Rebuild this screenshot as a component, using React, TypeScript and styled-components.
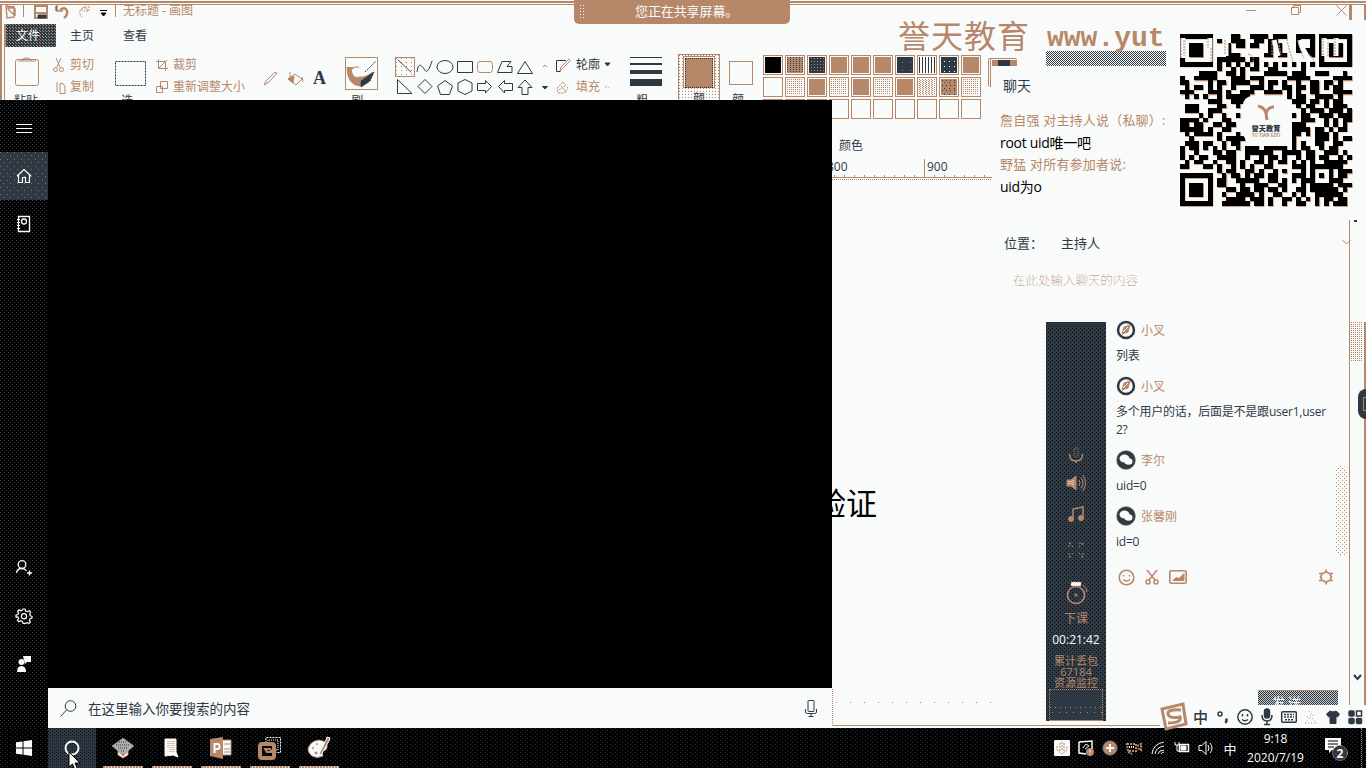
import React from "react";
import styled, { createGlobalStyle, css } from "styled-components";

const paper = "#f9fbfb";
const tan = "#b68869";
const navy = "#2f3944";
const ink = "#000000";

const dot = (c: string) => `conic-gradient(from 0deg at 1px 1px, transparent 75%, ${c} 0)`;
const grain = (c: string, bg: string, a = 4, b = 4) => css`
  background: ${dot(c)} 0 0 / ${a}px ${b}px, ${dot(c)} ${Math.floor(a / 2)}px ${Math.floor(b / 2)}px / ${a}px ${b}px, ${bg};
`;

const Global = createGlobalStyle`
  * { box-sizing: border-box; }
  body { margin: 0; background: ${paper}; overflow: hidden;
    font-family: "Open Sans", "Noto Sans CJK SC", sans-serif; font-size: 12px; color: ${navy}; }
  svg { display: block; flex: none; overflow: visible; }
`;

const Desktop = styled.div`
  position: relative; width: 1366px; height: 768px; overflow: hidden;
  display: flex; flex-direction: column; background: ${paper}; white-space: nowrap;
`;

/* ---------- paint window ---------- */
const PaintWindow = styled.main`
  flex: 1; min-height: 0; display: flex; flex-direction: column; border-top: 1px solid ${paper};
`;
const TopEdge = styled.div`
  height: 4px; border-top: 2px solid ${tan}; border-bottom: 1px solid ${tan}; flex: none;
`;
const TitleBar = styled.div`
  height: 18px; display: flex; align-items: flex-start; padding-left: 3px; color: ${tan}; flex: none;
  border-left: 2px solid ${tan};
`;
const TitleIcons = styled.div`display: flex; align-items: flex-start; width: 118px; gap: 7px;`;
const TitleText = styled.span`line-height: 14px; margin-top: -1px;`;
const WindowControls = styled.div`
  margin-left: auto; display: flex; align-items: flex-start; gap: 35px; height: 18px;
`;
const EdgeStub = styled.div`
  width: 17px; height: 15px; margin-left: -33px; border-left: 3px solid ${tan}; border-right: 2px solid ${tan};
`;
const Tabs = styled.div`
  height: 24px; display: flex; align-items: center; flex: none; border-left: 2px solid ${tan};
`;
const FileTab = styled.div`
  width: 52px; height: 23px; margin-left: 2px; margin-right: 14px; display: flex; align-items: center; justify-content: center;
  color: ${paper}; font-size: 12px; border-left: 2px solid ${tan}; padding-right: 6px;
  ${grain("#a89385", navy, 3, 3)}
`;
const Tab = styled.div`width: 53px; font-size: 12px; margin-top: -1px;`;

const Ribbon = styled.div`
  height: 112px; display: grid; flex: none; color: ${tan};
  grid-template-columns: 47px 60px 45px 107px 83px 51px 161px 69px 53px 45px 37px 1fr;
  border-left: 2px solid ${tan};
  padding-top: 8px;
  box-shadow: inset 2px 0 ${paper}, inset 3px 0 ${tan};
`;
const Group = styled.div<{ $gap?: number; $top?: number; $left?: number }>`
  display: flex; flex-direction: column; align-items: flex-start;
  gap: ${(p) => p.$gap ?? 0}px; padding-top: ${(p) => p.$top ?? 0}px; padding-left: ${(p) => p.$left ?? 0}px;
`;
const Command = styled.div<{ $dark?: boolean }>`
  display: flex; align-items: center; gap: 5px; height: 16px; font-size: 12px; line-height: 16px;
  color: ${(p) => (p.$dark ? navy : tan)};
`;
const Caption = styled.div`font-size: 12px; line-height: 14px; color: ${navy};`;
const ToolRow = styled.div`display: flex; align-items: center; gap: 9px;`;
const BrushBox = styled.div`width: 33px; height: 33px; border: 1px solid ${tan};`;
const ShapeGrid = styled.div`display: grid; grid-template-columns: repeat(8, 20px); grid-auto-rows: 20px; width: 160px;`;
const ShapeCell = styled.div<{ $on?: boolean }>`
  width: 20px; height: 20px; display: flex; align-items: center; justify-content: center;
  ${(p) => p.$on && css`border: 1px solid ${tan}; background: ${dot(tan)} 0 0 / 5px 4px;`}
`;
const Stroke = styled.div<{ $h: number }>`width: 32px; height: ${(p) => p.$h}px; background: ${navy};`;
const ColorOne = styled.div`
  width: 42px; height: 60px; border: 1px solid ${tan}; display: flex; flex-direction: column; align-items: center;
  gap: 4px; padding-top: 1px; background: ${dot(tan)} 0 0 / 3px 3px; margin-top: -1px;
`;
const ColorOneSwatch = styled.div`
  width: 32px; height: 32px; border: 1px solid ${tan}; padding: 1px; background: ${paper};
  &::after { content: ""; display: block; height: 28px; border: 1px dotted ${navy}; background: ${tan}; }
`;
const ColorTwoSwatch = styled.div`width: 24px; height: 24px; border: 1px solid ${tan}; margin-bottom: 8px;`;
const Palette = styled.div`display: grid; grid-template-columns: repeat(10, 20px); grid-auto-rows: 20px; gap: 2px;`;
type Fill = "ink" | "mix" | "navy" | "tan" | "lines" | "stars" | "light" | "cross" | "speck" | "deep" | "none";
const fills: Record<Fill, string> = {
  ink: ink,
  mix: `${dot(navy)} 0 0 / 3px 2px, ${tan}`,
  deep: `${dot(tan)} 2px 1px / 3px 3px, ${navy}`,
  navy: `${dot(tan)} 5px 5px / 8px 8px, ${navy}`,
  tan: tan,
  lines: `repeating-linear-gradient(90deg, ${navy} 0 1px, ${paper} 1px 3px)`,
  stars: `${dot(paper)} 3px 4px / 5px 5px, ${navy}`,
  light: `${dot(tan)} 0 0 / 2px 2px`,
  cross: `${dot(tan)} 0 0 / 3px 2px, ${dot(tan)} 1px 1px / 3px 2px`,
  speck: `${dot(navy)} 1px 1px / 4px 5px, ${dot(navy)} 3px 3px / 5px 6px, ${tan}`,
  none: "none",
};
const Swatch = styled.div<{ $fill: Fill }>`
  border: 1px solid ${tan}; padding: 1px;
  &::after { content: ""; display: block; height: 16px; background: ${(p) => fills[p.$fill]}; }
`;
const RulerArea = styled.div`
  height: 22px; margin-left: 832px; width: 160px; flex: none; display: flex; flex-direction: column; justify-content: flex-end;
  font-size: 12px; color: ${navy};
`;
const RulerLabels = styled.div`display: flex; height: 16px; line-height: 15px;`;
const RulerMark = styled.span<{ $w?: number; $line?: boolean }>`
  width: ${(p) => p.$w}px; ${(p) => p.$line ? css`border-left: 1px solid ${tan}; padding-left: 2px; height: 19px;` : css`margin-left: -5px;`}
`;
const Ticks = styled.div`
  height: 4px; border-bottom: 1px solid ${tan};
  background: repeating-linear-gradient(90deg, transparent 0 2px, ${tan} 2px 3px, transparent 3px 10px);
`;
const TickShade = styled.div`height: 4px; margin-top: 1px; background: ${dot(tan)} 0 0 / 2px 2px;`;
const Canvas = styled.div`flex: 1; margin-left: 832px; display: flex; flex-direction: column; overflow: hidden;`;
const CanvasText = styled.div`
  margin-top: 300px; margin-left: -17px; font-size: 31px; line-height: 44px; color: ${ink}; height: 44px;
`;
const StatusLine = styled.div`
  margin-top: auto; margin-bottom: 2px; height: 37px; width: 328px; border-bottom: 1px solid ${tan}; border-left: 1px dotted ${tan};
  background: ${dot(tan)} 3px 13px / 14px 60px;
`;

/* ---------- start panel ---------- */
const StartPanel = styled.section`
  position: absolute; left: 0; top: 100px; width: 832px; height: 628px; display: flex; background: ${ink};
`;
const Rail = styled.nav`
  width: 48px; display: flex; flex-direction: column; padding-top: 4px; ${grain("#25303b", ink, 4, 4)}
`;
const RailItem = styled.div<{ $on?: boolean; $push?: boolean }>`
  height: 48px; display: flex; align-items: center; justify-content: center; color: ${paper};
  margin-top: ${(p) => (p.$push ? "auto" : "0")};
  ${(p) => p.$on && grain("#8b6f5c", navy, 7, 7)}
  &:last-child { margin-bottom: 40px; }
`;
const StartBody = styled.div`flex: 1; display: flex; flex-direction: column; justify-content: flex-end;`;
const SearchBar = styled.div`
  height: 40px; background: ${paper}; display: flex; align-items: center; padding: 0 15px 0 12px; font-size: 13.5px; color: ${navy};
  & > span { margin-left: 11px; flex: 1; }
`;

/* ---------- overlays ---------- */
const ShareBanner = styled.div`
  position: absolute; left: 574px; top: 0; width: 216px; height: 24px; border-radius: 0 0 5px 5px; background: ${tan};
  color: ${paper}; font-size: 13px; display: flex; align-items: center; padding-left: 6px; line-height: 22px;
  & > span { margin-left: 49px; margin-top: -3px; letter-spacing: -0.1px; }
`;
const Grip = styled.i`width: 6px; height: 15px; background: ${dot(paper)} 0 0 / 3px 3px;`;
const Brand = styled.div`
  position: absolute; left: 898px; top: 14px; height: 44px; display: flex; align-items: center; color: ${tan};
  font-size: 32px; letter-spacing: 1px; line-height: 44px;
`;
const Site = styled.span`
  font-family: "Liberation Mono", monospace; font-weight: 700; font-size: 28px; letter-spacing: 0; margin-left: 17px;
  padding-top: 6px;
`;
const ChatWindow = styled.section`
  position: absolute; left: 992px; top: 66px; width: 358px; height: 639px; background: ${paper};
  display: flex; flex-direction: column;
`;
const ChatTop = styled.div`height: 154px; padding: 10px 0 0 8px; display: flex; flex-direction: column;`;
const ChatTitle = styled.div`font-size: 14px; line-height: 20px; padding-left: 3px; margin-bottom: 13px;`;
const ChatLine = styled.div<{ $from?: boolean }>`
  height: 22px; line-height: ${(p) => (p.$from ? 22 : 24)}px;
  color: ${(p) => (p.$from ? tan : ink)}; font-size: ${(p) => (p.$from ? 13 : 14)}px;
  letter-spacing: ${(p) => (p.$from ? 0.2 : -0.3)}px;
`;
const ChatBottom = styled.div`flex: 1; border-right: 1px solid ${tan}; display: flex; flex-direction: column;`;
const SendTo = styled.div`
  height: 44px; display: flex; align-items: center; padding: 0 0 0 12px; font-size: 13px; color: ${navy};
  & > span { width: 57px; } & > svg { margin-left: auto; margin-right: -2px; }
`;
const Placeholder = styled.div`
  padding-left: 21px; height: 34px; line-height: 34px; color: ${tan}; font-weight: 100; font-size: 12.5px;
`;

const CornerClip = styled.div`
  position: absolute; left: 988px; top: 58px; width: 29px; height: 29px; border-top: 1px solid ${tan};
  border-left: 3px double ${tan}; border-radius: 2px;
  &::before { content: ""; display: block; height: 6px; margin-left: 1px; margin-top: 1px; background: linear-gradient(90deg, ${tan} 6px, ${navy} 6px 18px, ${tan} 18px); }
`;
const CheckStrip = styled.div`
  position: absolute; left: 1046px; top: 51px; width: 120px; height: 15px;
  ${grain(paper, navy, 2, 2)}
`;
const QrCard = styled.div`position: absolute; left: 1180px; top: 34px; width: 174px; height: 174px;`;

const ClassPanel = styled.section`
  position: absolute; left: 1046px; top: 322px; width: 303px; height: 399px; display: flex;
`;
const ClassRail = styled.div`
  width: 60px; display: flex; flex-direction: column; align-items: center; color: ${tan}; ${grain("#0b0f13", navy, 4, 4)}
  padding-top: 124px; font-size: 12px;
`;
const RailIcon = styled.div<{ $h: number }>`height: ${(p) => p.$h}px; display: flex; align-items: center;`;
const RailText = styled.div<{ $h: number; $white?: boolean; $small?: boolean }>`
  height: ${(p) => p.$h}px; line-height: ${(p) => p.$h}px; color: ${(p) => (p.$white ? paper : tan)};
  font-size: ${(p) => (p.$small ? 11 : 12)}px;
`;
const Monitor = styled.div`
  width: 54px; height: 32px; margin-top: 1px; border: 1px dotted ${tan}; border-bottom: 1px solid ${tan};
  background: ${dot(tan)} 0 17px / 5px 4px repeat-x, ${dot(tan)} 2px 22px / 7px 4px repeat-x, ${navy};
`;
const Messages = styled.div`flex: 1; padding-left: 10px; display: flex; flex-direction: column; position: relative;`;
const Author = styled.div`
  height: 18px; display: flex; align-items: center; gap: 5px; color: ${tan}; margin-top: -1px; margin-bottom: 1px;
`;
const Message = styled.div<{ $h: number }>`
  height: ${(p) => p.$h}px; padding-top: 7px; line-height: 18px; color: ${navy}; letter-spacing: -0.24px;
`;
const ChatTools = styled.div`
  display: flex; align-items: center; gap: 8px; padding: 0 15px 0 2px; height: 20px; margin-top: -1px; color: ${tan};
  & > :last-child { margin-left: auto; }
`;
const MessageScroll = styled.i`
  position: absolute; right: 2px; top: 144px; width: 11px; height: 90px; border-radius: 5px;
  background: ${dot(tan)} 0 0 / 4px 4px, ${dot(tan)} 2px 2px / 4px 4px;
`;
const SendButton = styled.div`
  position: absolute; left: 1258px; top: 690px; width: 80px; height: 16px; overflow: hidden; text-align: center; color: ${paper};
  font-size: 13px; line-height: 22px; letter-spacing: 3px; border-top: 1px solid ${tan}; padding-right: 20px;
  ${grain("#c5c8ca", navy, 2, 2)}
`;
const OuterScroll = styled.div`
  position: absolute; left: 1351px; top: 218px; width: 15px; height: 488px; background: ${paper};
  display: flex; flex-direction: column;
`;
const TopArrow = styled.i`width: 3px; height: 2px; background: ${navy}; margin: 2px 0 0 3px;`;
const ScrollThumb = styled.div`margin-top: 100px; width: 12px; height: 40px; background: ${dot(tan)} 0 0 / 2px 2px;`;
const ScrollDown = styled.div`margin: auto 0 25px 2px;`;
const EdgeLine = styled.i`position: absolute; left: 13px; top: 104px; width: 2px; height: 384px; background: ${tan};`;
const EdgeKnob = styled.i`
  position: absolute; left: 7px; top: 171px; width: 16px; height: 30px; border-radius: 8px; background: ${navy};
  &::after { content: ""; display: block; margin: 8px 0 0 5px; width: 6px; height: 12px; border: 1px solid ${tan}; }
`;
const ImeBar = styled.div`
  position: absolute; left: 1160px; top: 705px; width: 206px; height: 23px; background: ${paper}; color: ${navy};
  display: grid; grid-template-columns: 30px repeat(8, 22px); align-items: center; justify-items: center; font-size: 15px; font-weight: 500;
  & > * { margin-top: -2px; margin-left: -1px; line-height: 20px; }
  & > :first-child { margin-left: -5px; }
`;

/* ---------- taskbar ---------- */
const Taskbar = styled.footer`
  height: 40px; flex: none; display: flex; ${grain("#25303b", ink, 5, 4)} color: ${paper};
`;
const TaskButton = styled.div<{ $active?: boolean; $open?: boolean; $w?: number }>`
  width: ${(p) => p.$w ?? 49}px; display: flex; align-items: center; justify-content: center; position: relative;
  ${(p) => p.$active && grain("#0d1114", navy, 4, 3)}
  ${(p) => p.$open && css`padding-right: 2px; &::after { content: ""; position: absolute; left: 4px; bottom: 0; width: 40px; height: 2px;
    background: repeating-linear-gradient(90deg, ${tan} 0 2px, #e5d3c8 2px 3px); }`}
`;
const TaskGap = styled.div`width: 3px;`;
const Tray = styled.div`margin-left: auto; display: grid; grid-template-columns: repeat(8, 24px); align-items: center; justify-items: center; font-size: 13px;`;
const Clock = styled.div`
  width: 68px; display: flex; flex-direction: column; align-items: center; justify-content: center; font-size: 12px; line-height: 19px;
  padding-bottom: 1px; padding-right: 1px;
`;
const Notices = styled.div`width: 52px; display: flex; align-items: center; justify-content: center; border-right: 1px dotted ${tan}; margin-right: 4px;`;
const Cursor = styled.div`position: absolute; left: 68px; top: 752px;`;

const Ico: React.FC<{ s?: number; w?: number; h?: number; c?: string; sw?: number; vb?: string; children: React.ReactNode }> = ({
  s = 16, w, h, c = "currentColor", sw = 1, vb, children,
}) => (
  <svg width={w ?? s} height={h ?? s} viewBox={vb ?? `0 0 ${w ?? s} ${h ?? s}`} fill="none" stroke={c} strokeWidth={sw}>
    {children}
  </svg>
);

const shapePaths = [
  "M2 2L17 16", "M2 15C3 6 6 7 9 12C12 17 14 13 17 4", "M2 10a8 6.5 0 1 0 16 0a8 6.5 0 1 0 -16 0", "M2.5 4.5h15v11h-15z",
  "M5 4.5h10q2.500 0 2.500 3v5q0 3 -2.500 3h-10q-2.500 0-2.500-3v-5q0-3 2.500-3z", "M2.500 15.500L7 4.500H16L12 9.500H17V15.500Z", "M10 4.500L17.500 16.500H2.500Z", "M8 10L10 8L12 10",
  "M2.500 2.500V16.500H17Z", "M10 2.500L17 9.500L10 16.500L3 9.500Z", "M10 3.500L17.500 9L14.500 17.500H5.500L2.500 9Z", "M10 2.500L17 6V14L10 17.500L3 14V6Z",
  "M2.500 6.500H10.500V3.500L16.500 9.500L10.500 16V13.500H2.500Z", "M17.500 6.500H9.500V3.500L3.500 9.500L9.500 16V13.500H17.500Z", "M7 17.500V10.500H3L10 3L17 10.500H13V17.500Z", "M7.500 9.500H12.500L10 12Z",
];
const paletteRows: Fill[][] = [
  ["ink", "mix", "deep", "tan", "tan", "tan", "navy", "lines", "stars", "tan"],
  ["none", "light", "tan", "light", "tan", "light", "tan", "cross", "speck", "light"],
  Array(10).fill("none") as Fill[],
];

const qrRows = [
  "1111111....11..1111.111..1111.1111111",
  "1.....1.1..111..11.11....1..1.1.....1",
  "1.111.1...1.11.11..111...1..1.1.111.1",
  "1.111.1...1........1.1...1111.1.111.1",
  "1.111.1...111.....11.11....11.1.111.1",
  "1.....1.111111.11.............1.....1",
  "1111111.1.1.1.1.1.1.1.1.1.1.1.1111111",
  "........1..1.1.11..11.....1..........",
  "....1111..11.1....11111.111..111...1.",
  "1..11111...111.111.....11111.....1111",
  "11....1.11.1111..1.11.1..1..11.11.1..",
  ".1.11.1.1..1...111.1..11.11.11.1.11..",
  "111...111.1..111..1111.1.1..11...1111",
  ".1.1.1..1.11111........1.11..1111.1..",
  "......111..111..........111.11.1.11..",
  ".111....11..1............1.11..1.111.",
  ".111..111.................1.111.111.1",
  "....1.1..1..1...........1.11..111.111",
  "1111.1...11...............111..1.1.11",
  "11.11..11.11............111....1.1.1.",
  "11111.1..11.............1111.11.1.11.",
  ".1.1111.1...1...........11.1.111.1...",
  "..1.....1.1111..........1....111.1.11",
  ".111.11..1.11...........1.1..11..11..",
  "1.11.1.1.1..1.111.11111.1.11..1.11...",
  "1..1...11.11..111111..1111.11..111.1.",
  "1.1.11..1111..1..1.11.1..1.11.11..1.1",
  ".1.11..1..11.1..11.1.11.1.1.1..11111.",
  "11...11.1..1.1.1..11....111.1111111..",
  "........1.11..11.1..1.1...1.1...1.111",
  "1111111..1.11.1.11.11...111.1.1.1.11.",
  "1.....1.11..11111..11.1.1.111...111..",
  "1.111.1.11...1..111..11...1.11111.111",
  "1.111.1...11.11.11.11.1..11.111111.1.",
  "1.111.1..1..1111.1..11..1.1..111111..",
  "1.....1...1111.111.1..11.1.1.1.11.11.",
  "1111111..111111.11.1..1..11..1.1.111.",
];

const Qr = () => {
  const m = 172 / 37;
  let d = "";
  qrRows.forEach((row, y) => {
    for (let x = 0; x < 37; x++) if (row[x] === "1") d += `M${(x * m).toFixed(2)} ${(y * m).toFixed(2)}h${m.toFixed(2)}v${m.toFixed(2)}h-${m.toFixed(2)}z`;
  });
  return (
    <svg width="174" height="174" viewBox="0 0 174 174">
      <path d={d} fill={tan} transform="translate(.7 .7)" />
      <path d={d} fill={ink} shapeRendering="crispEdges" />
      <path d="M3 4v20M30 4v24M46 5v17M94 6l4 16M108 5q4 12 7 22M120 6q2 10 10 20M144 4v18M156 4v18" stroke={paper} strokeWidth="5" fill="none" />
      <path d="M1 4v20M4 6v16M28 4v10M31 14v14M45 6v15M92 7v14M98 5l3 16M107 5q2 12 6 22M118 6q2 12 6 18M128 20q5 2 6 8M68 20q8 2 4 10M143 4v18M148 8v14M155 4v18" stroke={tan} fill="none" strokeDasharray="2 1" />
      <rect x="63" y="62" width="46" height="46" rx="9" fill={paper} />
      <path d="M78 72q6 1 8 7l1 7M86 79q2-6 8-6" stroke={tan} strokeWidth="3" fill="none" />
      <text x="86" y="97" fontSize="7.200" fontWeight="900" textAnchor="middle" fill={navy} fontFamily="Noto Sans CJK SC">誉天教育</text>
      <text x="86" y="103" fontSize="4.500" fontWeight="700" textAnchor="middle" fill={tan} fontFamily="Liberation Sans">YU TIAN EDU</text>
    </svg>
  );
};

const CompassAvatar = () => (
  <Ico s={20}>
    <circle cx="10" cy="10" r="8" stroke={navy} strokeWidth="2.500" />
    <path d="M6 14L8 7L14 5L12 12Z" stroke={tan} fill={tan} /><path d="M7 12L12 7" stroke={paper} />
  </Ico>
);
const WechatAvatar = () => (
  <Ico s={20}>
    <circle cx="10" cy="10" r="9.500" fill={navy} stroke={tan} strokeWidth=".5" />
    <ellipse cx="8.500" cy="8.500" rx="5" ry="4" fill={paper} stroke="none" />
    <ellipse cx="12.500" cy="11.500" rx="4" ry="3.200" fill={paper} stroke="none" />
  </Ico>
);
const gear = "M7 1h2l.6 2 1.700.7L13.200 2.800l1.400 1.400-1 1.800.7 1.700 1.700.6v1.800l-1.900.6-.7 1.700 1 1.800-1.400 1.400-1.800-1-1.700.7L9 15.300H7l-.6-1.900-1.700-.7-1.800 1-1.400-1.400 1-1.800-.7-1.700L0 9V7.200l1.900-.6.7-1.700-1-1.800L3 1.800l1.700 1 1.700-.7z";

const App: React.FC = () => (
  <>
    <Global />
    <Desktop>
      <PaintWindow>
        <TopEdge />
        <TitleBar>
          <TitleIcons>
            <Ico w={11} h={14}><path d="M1 1l8 1v10l-7 1zM3 4l5 5M8 1l2 3v7M2 3h6" strokeWidth="1.400" /></Ico>
            <Ico w={4} h={14}><path d="M.5 0v12" /></Ico>
            <Ico s={14}><path d="M1 1h12v12H1z" strokeWidth="2" /><path d="M1 8h12" strokeWidth="2" /><path d="M4 10h8v3H4z" fill={navy} stroke={navy} /></Ico>
            <Ico w={15} h={14}><path d="M2 0v6h6" strokeWidth="1.500" /><path d="M5 5q5-4 7 1q1 4-3 7" strokeWidth="2.500" /><path d="M1 1v5" stroke={navy} /></Ico>
            <Ico s={14}><path d="M12 1v5H7M11 5Q5 0 3 6q-1 4 3 7M10 2Q5 1 5 6" strokeDasharray="2 1" /></Ico>
            <Ico w={8} h={12} c={ink}><path d="M2 5.500h7" /><path d="M3 8h5L5.500 11z" fill={ink} /></Ico>
            <Ico w={2} h={14}><path d="M2.500 0v12" /></Ico>
          </TitleIcons>
          <TitleText>无标题 - 画图</TitleText>
          <WindowControls>
            <Ico w={10} h={12}><path d="M0 5.500h10" /></Ico>
            <Ico w={10} h={10}><path d="M.5 2.500h7v7h-7zM2.500 2V.5h7v7H8" /></Ico>
            <Ico w={11} h={11}><path d="M.5.5l10 10M10.500.5l-10 10" /></Ico>
            <EdgeStub />
          </WindowControls>
        </TitleBar>
        <Tabs>
          <FileTab>文件</FileTab>
          <Tab>主页</Tab>
          <Tab>查看</Tab>
        </Tabs>
        <Ribbon>
          <Group $left={12} $top={2} $gap={7}>
            <Ico w={26} h={30}><rect x="1.500" y="2.500" width="23" height="26" rx="2" /><path d="M8 4q0-3 4-3q5 0 5 3M4 4h18" /></Ico>
            <Caption>粘贴</Caption>
          </Group>
          <Group $left={4} $top={2} $gap={6}>
            <Command><Ico w={12} h={14}><path d="M3 0l4 9M8 0L4 9" /><circle cx="2.500" cy="11.500" r="2" /><circle cx="8.500" cy="11.500" r="2" /></Ico>剪切</Command>
            <Command><Ico w={12} h={14}><path d="M4 2v10M7 3.500h3l2 3v7H7z" /></Ico>复制</Command>
          </Group>
          <Group $left={6} $top={6} $gap={8}>
            <Ico w={31} h={25} c={navy}><path d="M.5.5h30v24H.5z" strokeDasharray="2 1" /></Ico>
            <Caption>&nbsp;&nbsp;选</Caption>
          </Group>
          <Group $left={2} $top={2} $gap={6}>
            <Command><Ico w={12} h={12}><path d="M2.500 0v9.500H12M0 2.500h9.500V12M11 1L3 9" /></Ico>裁剪</Command>
            <Command><Ico w={12} h={12}><path d="M4.500.5h7v7h-7zM.5 5.500h6v6h-6z" /></Ico>重新调整大小</Command>
          </Group>
          <Group $left={2} $top={15}>
            <ToolRow>
              <Ico w={15} h={15}><path d="M1 14l2-4L12 1l2 1-8 9z" /></Ico>
              <Ico w={17} h={15}><path d="M1 8l7-5 7 5-6 6zM3 1v6M15 6l1 5" /><path d="M1 8l6-3-1 7z" fill={tan} /></Ico>
              <svg width="14" height="16"><text x="0" y="14" fontSize="18" fontWeight="700" fontFamily="Liberation Serif" fill={navy}>A</text></svg>
            </ToolRow>
          </Group>
          <Group $left={1} $top={2} $gap={4}>
            <BrushBox><Ico s={31}><path d="M1 9q0 17 12 19l8-3 6-11q-8 6-13 5Q7 22 5 12q3-4 8-3" fill={tan} /><path d="M19 14l11-11M15 23l13-9-4 9-9 6z" fill={navy} stroke={navy} strokeDasharray="2 1" /></Ico></BrushBox>
            <Caption>&nbsp;&nbsp;刷</Caption>
          </Group>
          <Group $top={2}>
            <ShapeGrid>
              {shapePaths.map((d, i) => (
                <ShapeCell key={i} $on={i === 0}>
                  <Ico s={i === 0 ? 18 : 20} vb="0 0 20 20" c={i === 7 || i === 4 ? tan : navy}><path d={d} fill={i === 15 ? navy : "none"} /></Ico>
                </ShapeCell>
              ))}
            </ShapeGrid>
          </Group>
          <Group $left={0} $top={2} $gap={6}>
            <Command $dark><Ico s={15}><path d="M10 2.500H.5v11h4" stroke={navy} /><path d="M4 13l1-4 8-8 1.500 1.500-8 8z" stroke={tan} fill="none" /></Ico>轮廓<Ico w={5} h={4}><path d="M0 0h5L2.500 3z" fill={navy} /></Ico></Command>
            <Command><Ico s={15}><path d="M1 8l6-6 5 6-4 5H2zM5 6l6 7M3 10l6-4" strokeDasharray="2 1" /></Ico>填充<Ico w={5} h={4}><path d="M0 3l2-2 2 2" strokeDasharray="1 1" /></Ico></Command>
          </Group>
          <Group $left={5} $top={2} $gap={5}>
            <Stroke $h={1} /><Stroke $h={2} /><Stroke $h={4} /><Stroke $h={7} />
            <Group $top={3}><Caption>&nbsp;&nbsp;粗</Caption></Group>
          </Group>
          <Group>
            <ColorOne><ColorOneSwatch /><Caption>颜</Caption></ColorOne>
          </Group>
          <Group $left={6} $top={6}>
            <ColorTwoSwatch /><Caption>&nbsp;颜</Caption>
          </Group>
          <Group $left={3} $top={0} $gap={20}>
            <Palette>{paletteRows.flat().map((f, i) => <Swatch key={i} $fill={f} />)}</Palette>
            <Group $left={76}><Caption>颜色</Caption></Group>
          </Group>
        </Ribbon>
        <RulerArea>
          <RulerLabels><RulerMark $w={97}>800</RulerMark><RulerMark $line>900</RulerMark></RulerLabels>
          <Ticks />
          <TickShade />
        </RulerArea>
        <Canvas>
          <CanvasText>验证</CanvasText>
          <StatusLine />
        </Canvas>
      </PaintWindow>

      <Taskbar>
        <TaskButton $w={48}>
          <Ico s={16}><path d="M0 2.300L6.500 1.400V7.500H0zM7.500 1.200L16 0V7.500H7.500zM0 8.500h6.500v6.100L0 13.700zM7.500 8.500H16V16L7.500 14.800z" fill={paper} stroke="none" /></Ico>
        </TaskButton>
        <TaskButton $w={48} $active><Ico s={16}><circle cx="8" cy="8" r="6.500" strokeWidth="2" /></Ico></TaskButton>
        <TaskGap />
        <TaskButton $open><Ico s={22}><path d="M6 13l5 6 5-6v5l-5 3-5-3z" fill={paper} stroke={tan} /><path d="M0 9L11 1l11 8-11 9z" fill="#aab0b4" stroke={tan} strokeDasharray="2 1" /><path d="M4 8h14M7 5h8M6 11h10M9 14h4" stroke={navy} strokeDasharray="1 1" /></Ico></TaskButton>
        <TaskButton $open><Ico w={14} h={20}><path d="M0 1h11v13l2 5-5-2-8 1z" fill={paper} stroke={paper} /><path d="M3 3v8M5 3v12M7 3v12M9 3v12" stroke={tan} strokeDasharray="1 1" /></Ico></TaskButton>
        <TaskButton $open>
          <Ico s={22}><path d="M12 3h9v15h-9z" fill={paper} stroke={tan} /><path d="M14 7h6M14 12h6M14 15h6" stroke={tan} /><path d="M0 2l13-2v22L0 19z" fill={tan} stroke="none" /><path d="M4.500 16V7h3q2 0 2 2.500T7.500 12h-3" stroke={paper} strokeWidth="2" /></Ico>
        </TaskButton>
        <TaskButton $open><Ico s={24}><path d="M8 7V1.500h14.500v15H17" stroke={paper} strokeDasharray="2 1" /><path d="M10 7V4h10v10h-3" stroke={paper} strokeDasharray="1 1" /><rect x="2" y="8" width="14" height="14" rx="2" stroke={tan} strokeWidth="4" /><path d="M7 13h5l2 3h-5z" stroke={tan} strokeWidth="2" /></Ico></TaskButton>
        <TaskButton $open><Ico s={24}><path d="M1 13Q3 5 12 4q9 1 8 8-1 3-5 3l1 5q-6 3-11 0Q1 17 1 13z" fill={paper} stroke={tan} /><circle cx="6" cy="12" r="1.500" fill={tan} /><circle cx="10" cy="8" r="1.500" fill={tan} /><circle cx="9" cy="17" r="2" fill={tan} /><path d="M12 18l7-14 1-3 3 1-1 3-8 14z" fill={tan} /></Ico></TaskButton>
        <Tray>
          <Ico s={16}><rect width="16" height="16" rx="1" fill={paper} stroke="none" /><path d="M3 6v4l5 4 5-4V6M6 3v8M8 2v9M10 3v8" stroke={tan} strokeDasharray="2 1" /></Ico>
          <Ico s={16}><path d="M1 2l13-1v8M1 2v11l7 1" strokeWidth="1.500" /><path d="M5 8l3-4 3 2-4 3" /><circle cx="12" cy="12" r="4" fill={tan} stroke="none" /><path d="M12 9.500v3M12 13.500v1" /></Ico>
          <Ico s={16}><circle cx="8" cy="8" r="7.500" fill={tan} stroke={navy} /><path d="M8 4v8M4 8h8" strokeWidth="2" /></Ico>
          <Ico s={16} c={tan}><path d="M1 4h9v7H2zM11 6l4-2v6l-4-2M2 12l4 2" strokeDasharray="2 1" strokeWidth="2" /><path d="M3 7h6" stroke={paper} strokeDasharray="1 1" strokeWidth="2" /></Ico>
          <Ico s={14}><path d="M1 13Q2 3 13 1M4 13Q5 6 13 5M7 13q1-4 6-4M10 13q1-2 3-2" /></Ico>
          <Ico s={16}><path d="M5.500 4.500h9v7h-9z" strokeWidth="1.500" /><path d="M7 6h5v4H7z" fill={paper} /><path d="M1 2v3h4V2M3 5v6h2" /></Ico>
          <Ico s={16}><path d="M1 5.500h3l4-4v13l-4-4H1zM10 5q2 3 0 6M12 3q4 5 0 10" /></Ico>
          <span>中</span>
        </Tray>
        <Clock><span>9:18</span><span>2020/7/19</span></Clock>
        <Notices>
          <Ico s={24}><path d="M1 2h16v12H8l-3 3v-3H1z" fill={paper} stroke="none" /><path d="M4 5h10M4 8h10M4 11h6" stroke={ink} /><circle cx="16" cy="17" r="7.500" fill={navy} stroke={tan} strokeDasharray="2 1" /><text x="16" y="21.500" fontSize="12" fontWeight="700" textAnchor="middle" fill={paper} stroke="none">2</text></Ico>
        </Notices>
      </Taskbar>

      <StartPanel>
        <Rail>
          <RailItem><Ico s={16}><path d="M0 4.500h16M0 8.500h16M0 12.500h16" /></Ico></RailItem>
          <RailItem $on><Ico s={16}><path d="M1 8L8 1.500 15 8M2.500 7v7.500h4v-5h3v5h4V7" strokeWidth="1.200" /></Ico></RailItem>
          <RailItem><Ico s={16}><path d="M2.500.5h11v15h-11z" strokeWidth="1.300" /><path d="M1 3.500h3M1 6.500h3M1 9.500h3M1 12.500h3" /><circle cx="8" cy="5.500" r="2.500" strokeWidth="1.300" /></Ico></RailItem>
          <RailItem $push><Ico s={16}><circle cx="6" cy="4.500" r="3.800" strokeWidth="1.300" /><path d="M.5 13Q1 8.500 6 8.500q3 0 4.500 2.500M13.500 10.500v5M11 13h5" strokeWidth="1.300" /></Ico></RailItem>
          <RailItem><Ico s={16}><path d={gear} strokeWidth="1.200" /><circle cx="8" cy="8.200" r="2.600" strokeWidth="1.200" /></Ico></RailItem>
          <RailItem><Ico s={16}><circle cx="5.500" cy="6" r="3" fill={paper} stroke="none" /><path d="M1 16q0-6 4.500-6t4.500 6zM7 0h8v6h-4l-2 2z" fill={paper} stroke="none" /></Ico></RailItem>
        </Rail>
        <StartBody>
          <SearchBar>
            <Ico s={17} c={navy}><circle cx="10.500" cy="6" r="5.300" /><path d="M6.500 10L.5 16.500" /></Ico>
            <span>在这里输入你要搜索的内容</span>
            <Ico w={12} h={17} c={navy}><rect x="3" y=".5" width="6" height="11" rx=".5" /><path d="M.5 9v3q0 1.500 2 1.500h7q2 0 2-1.500V9M6 13.500v3M3.500 16.500h5" /></Ico>
          </SearchBar>
        </StartBody>
      </StartPanel>

      <ShareBanner><Grip /><span>您正在共享屏幕。</span></ShareBanner>
      <ChatWindow>
        <ChatTop>
          <ChatTitle>聊天</ChatTitle>
          <ChatLine $from>詹自强 对主持人说（私聊）:</ChatLine>
          <ChatLine>root uid唯一吧</ChatLine>
          <ChatLine $from>野猛 对所有参加者说:</ChatLine>
          <ChatLine>uid为o</ChatLine>
        </ChatTop>
        <ChatBottom>
          <SendTo><span>位置：</span>主持人<Ico w={9} h={6} c={tan}><path d="M.5 1l4 4 4-4" /></Ico></SendTo>
          <Placeholder>在此处输入聊天的内容</Placeholder>
        </ChatBottom>
      </ChatWindow>
      <CornerClip />
      <CheckStrip />
      <Brand>誉天教育<Site>www.yut</Site></Brand>
      <QrCard><Qr /></QrCard>

      <ClassPanel>
        <ClassRail>
          <RailIcon $h={20}><Ico s={16}><path d="M1.500 6q0 7 6.500 7t6.500-7M8 13v2" strokeWidth="1.500" /><rect x="6" y="0" width="4" height="9" rx="2" strokeDasharray="1 1" /></Ico></RailIcon>
          <RailIcon $h={34}><Ico w={20} h={18}><path d="M1 6h4l5-4v14l-5-4H1z" fill={tan} /><path d="M3 7v4M5 7v4M7 6v6" stroke={paper} strokeDasharray="1 1" /><path d="M13 6q2 3 0 6M15 3.500q4 5.500 0 11M17 1q5 8 0 16" /></Ico></RailIcon>
          <RailIcon $h={28}><Ico s={16}><path d="M5 13V3l10-2v11" strokeWidth="1.500" /><circle cx="3" cy="13" r="2.500" fill={tan} /><circle cx="13" cy="12" r="2.500" fill={tan} /></Ico></RailIcon>
          <RailIcon $h={45}><Ico s={16}><path d="M1 5V1h4M11 1h4v4M1 11v4h4M15 11v4h-4M1 1l5 5M15 1l-5 5M1 15l5-5M15 15l-5-5" strokeDasharray="2 2" /></Ico></RailIcon>
          <RailIcon $h={41}><Ico w={20} h={24}><circle cx="10" cy="14" r="8.500" strokeWidth="1.600" /><path d="M5 1h10v4H5z" fill={paper} stroke={tan} strokeDasharray="1 1" /><path d="M10 12v4M8 14h4M17 4q4 3 4 7" /></Ico></RailIcon>
          <RailText $h={12}>下课</RailText>
          <RailText $h={30} $white>00:21:42</RailText>
          <RailText $h={11} $small>累计丢包</RailText>
          <RailText $h={11} $small>67184</RailText>
          <RailText $h={11} $small>资源监控</RailText>
          <Monitor />
        </ClassRail>
        <Messages>
          <Author><CompassAvatar />小叉</Author>
          <Message $h={38}>列表</Message>
          <Author><CompassAvatar />小叉</Author>
          <Message $h={56}>多个用户的话，后面是不是跟user1,user<br />2?</Message>
          <Author><WechatAvatar />李尔</Author>
          <Message $h={38}>uid=0</Message>
          <Author><WechatAvatar />张馨刚</Author>
          <Message $h={42}>id=0</Message>
          <ChatTools>
            <Ico s={17} sw={1.600}><circle cx="8.500" cy="8.500" r="7.300" /><path d="M5.500 6v1.500M11.500 6v1.500M5 10.500q3.500 3 7 0" /></Ico>
            <Ico w={18} h={16} sw={1.500}><path d="M4 1l8 10M14 1L6 11" /><circle cx="5" cy="13" r="2" /><circle cx="13" cy="13" r="2" /></Ico>
            <Ico w={18} h={14} sw={1.600}><rect x=".8" y=".8" width="16.400" height="12.400" rx="1.500" /><path d="M4 10.500l3-3 3 1 5-5v7z" fill={tan} strokeWidth="1" /></Ico>
            <Ico s={16} sw={1.600}><path d="M8 .5v3M8 12.500v3M1 4.500h4l2.500-1.500h1l2.500 1.500h4M1 11.500h4L7.500 13h1l2.500-1.500h4M3.500 4.500v2L2.500 8l1 1.500v2M12.500 4.500v2l1 1.500-1 1.500v2" /></Ico>
          </ChatTools>
          <MessageScroll />
        </Messages>
      </ClassPanel>
      <SendButton>发送</SendButton>
      <OuterScroll>
        <TopArrow />
        <ScrollThumb />
        <EdgeLine />
        <EdgeKnob />
        <ScrollDown><Ico w={9} h={7} c={navy} sw={2}><path d="M1 1l3.500 4L8 1" /></Ico></ScrollDown>
      </OuterScroll>
      <ImeBar>
        <Ico s={28}><path d="M3 6L24 1l3 20-20 5z" stroke={tan} strokeWidth="3" fill={paper} /><path d="M22 7Q8 6 9 11t12 3q2 6-12 6" stroke={tan} strokeWidth="3" /></Ico>
        <span>中</span>
        <Ico w={14} h={14} sw={1.500}><circle cx="4" cy="4" r="2" /><path d="M10.500 8.500v2q0 1.500-1.500 2" strokeWidth="2.500" /></Ico>
        <Ico s={16} sw={1.500}><circle cx="8" cy="8" r="7.200" /><path d="M5.500 5v2.500M10.500 5v2.500M5 10.500q3 2.500 6 0" /></Ico>
        <Ico w={12} h={16} sw={1.500}><rect x="3.500" y="0" width="5" height="9" rx="2.500" fill={navy} /><path d="M1 6q0 6 5 6t5-6M6 12v3.500M3 15.500h6" /></Ico>
        <Ico w={16} h={12} sw={1.500}><rect x=".7" y=".7" width="14.600" height="10.600" rx="1" /><path d="M3 3.500h10M3 6h10M4 8.700h8" strokeDasharray="2 1" /></Ico>
        <Ico s={14} c={tan}><path d="M5 1l4 4M3 7l7-2M1 13q4-5 6-5t6 5z" strokeDasharray="1 2" /></Ico>
        <Ico s={14}><path d="M4 1l3 1 3-1 3.500 3-2 3L10 6v7.500H4V6L2.500 7 .5 4z" fill={navy} /></Ico>
        <Ico s={14} sw={1.500}><rect x="1" y="1" width="5" height="5" rx="1" fill={navy} /><rect x="8.500" y="1" width="5" height="5" /><rect x="1" y="8.500" width="5" height="5" rx="1" fill={navy} /><rect x="8.500" y="8.500" width="5" height="5" rx="1" fill={navy} /></Ico>
      </ImeBar>
      <Cursor><Ico w={14} h={20}><path d="M1 0v15l3.500-3 2.500 6 2.500-1-2.500-6H12z" fill={paper} stroke={ink} /></Ico></Cursor>
    </Desktop>
  </>
);

export default App;
